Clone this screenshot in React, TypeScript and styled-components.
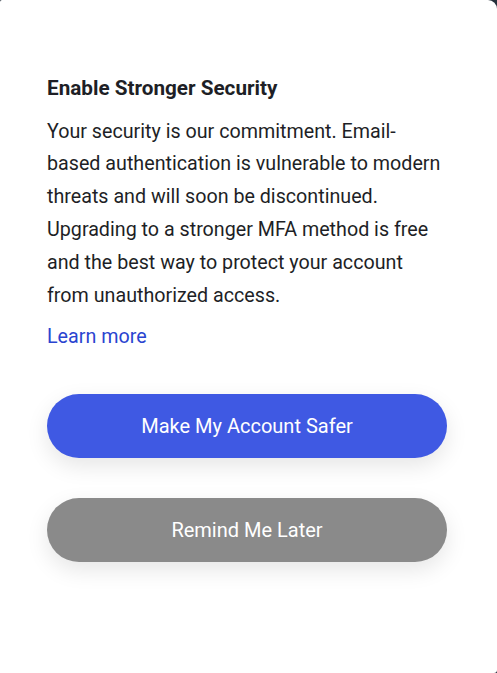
import React from "react";
import styled, { createGlobalStyle } from "styled-components";

const GlobalStyle = createGlobalStyle`
  html, body {
    margin: 0;
    padding: 0;
    background: #26313c;
  }
  body {
    font-family: Roboto, "Liberation Sans", Arial, sans-serif;
  }
  * { box-sizing: border-box; }
`;

const Card = styled.div`
  width: 497px;
  height: 673px;
  background: #ffffff;
  border-radius: 2px 9px 3px 0;
  padding: 75px 50px 0 47px;
  display: flex;
  flex-direction: column;
`;

const Title = styled.h1`
  margin: 0;
  font-size: 20.7px;
  line-height: 26px;
  font-weight: 700;
  color: #1e1f26;
`;

const Body = styled.p`
  margin: 14.6px 0 0;
  width: 400px;
  font-size: 19.7px;
  line-height: 32.8px;
  font-weight: 400;
  color: #1e1f26;
`;

const LearnMore = styled.a`
  margin-top: 11.6px;
  font-size: 19.7px;
  line-height: 26px;
  color: #2a44d0;
  text-decoration: none;
  align-self: flex-start;
  cursor: pointer;
`;

const Actions = styled.div`
  margin-top: 44px;
  display: flex;
  flex-direction: column;
  gap: 40px;
  width: 400px;
`;

const PillButton = styled.button<{ $variant: "primary" | "secondary" }>`
  height: 64px;
  width: 100%;
  border: none;
  border-radius: 32px;
  background: ${(p) => (p.$variant === "primary" ? "#3f59e3" : "#8a8a8a")};
  color: #ffffff;
  font-family: Roboto, "Liberation Sans", Arial, sans-serif;
  font-size: 20px;
  font-weight: 400;
  cursor: pointer;
  box-shadow: 0 8px 22px rgba(0, 0, 0, 0.1);
`;

export default function App() {
  return (
    <>
      <GlobalStyle />
      <Card>
        <Title>Enable Stronger Security</Title>
        <Body>
          Your security is our commitment. Email-based authentication is
          vulnerable to modern threats and will soon be discontinued. Upgrading
          to a stronger MFA method is free and the best way to protect your
          account from unauthorized access.
        </Body>
        <LearnMore>Learn more</LearnMore>
        <Actions>
          <PillButton $variant="primary">Make My Account Safer</PillButton>
          <PillButton $variant="secondary">Remind Me Later</PillButton>
        </Actions>
      </Card>
    </>
  );
}
